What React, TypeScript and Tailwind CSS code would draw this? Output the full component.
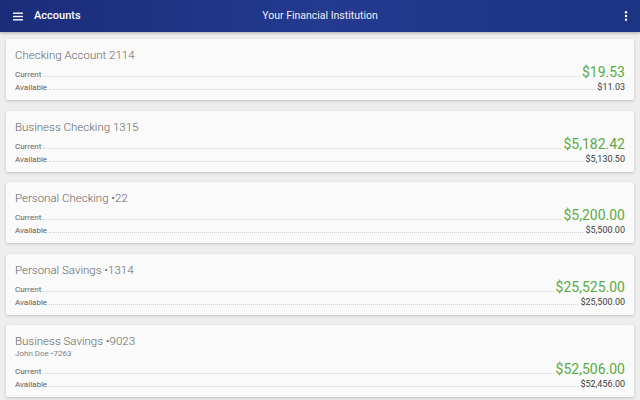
import React from 'react';

const accounts = [
  { name: 'Checking Account 2114', current: '$19.53', available: '$11.03' },
  { name: 'Business Checking 1315', current: '$5,182.42', available: '$5,130.50' },
  { name: 'Personal Checking •22', current: '$5,200.00', available: '$5,500.00' },
  { name: 'Personal Savings •1314', current: '$25,525.00', available: '$25,500.00' },
  { name: 'Business Savings •9023', owner: 'John Doe •7263', current: '$52,506.00', available: '$52,456.00' },
];

export default function App() {
  return (
    <div className="w-[640px] h-[400px] overflow-hidden bg-[#eeeeee] font-['Roboto',sans-serif]">
      <header className="h-[32px] grid grid-cols-[1fr_auto_1fr] items-center px-[13px] text-white bg-gradient-to-r from-[#1b2c7a] via-[#233a8f] to-[#1d3384] shadow-[0_1px_3px_rgba(0,0,0,0.3)]">
        <div className="flex items-center">
          <svg width="10" height="9" viewBox="0 0 10 9" className="shrink-0">
            <rect x="0" y="0.5" width="10" height="1.4" fill="white" />
            <rect x="0" y="3.8" width="10" height="1.4" fill="white" />
            <rect x="0" y="7.1" width="10" height="1.4" fill="white" />
          </svg>
          <span className="ml-[11px] text-[11px] font-medium">Accounts</span>
        </div>
        <span className="text-[10.5px] text-[#eef0f8]">Your Financial Institution</span>
        <div className="flex justify-end">
          <svg width="4" height="10" viewBox="0 0 4 10" className="shrink-0 mr-[-1px]">
            <circle cx="2" cy="1.3" r="1.2" fill="white" />
            <circle cx="2" cy="5" r="1.2" fill="white" />
            <circle cx="2" cy="8.7" r="1.2" fill="white" />
          </svg>
        </div>
      </header>

      <div className="flex flex-col gap-[10.5px] px-[6px] pt-[7px]">
        {accounts.map((a, i) => (
          <div
            key={i}
            className="bg-[#fafafa] rounded-[2px] shadow-[0_1px_3px_rgba(0,0,0,0.2)] px-[9px] pt-[9px] pb-[7px]"
          >
            <div className="text-[11.5px] leading-[15px] text-[#666666] font-light">{a.name}</div>
            {a.owner && (
              <div className="text-[8px] leading-[10px] text-[#808080] mb-px">{a.owner}</div>
            )}
            <div className="flex items-baseline h-[18px]">
              <span className="text-[8px] text-[#606060]">Current</span>
              <span className="flex-1 mx-[2px] border-b border-dotted border-[#d0d0d0]" />
              <span className="text-[14px] leading-[18px] text-[#5aab42]">{a.current}</span>
            </div>
            <div className="flex items-baseline h-[12px]">
              <span className="text-[8px] text-[#606060]">Available</span>
              <span className="flex-1 mx-[2px] border-b border-dotted border-[#d0d0d0]" />
              <span className="text-[9px] leading-[12px] text-[#3c3c3c]">{a.available}</span>
            </div>
          </div>
        ))}
      </div>
    </div>
  );
}
